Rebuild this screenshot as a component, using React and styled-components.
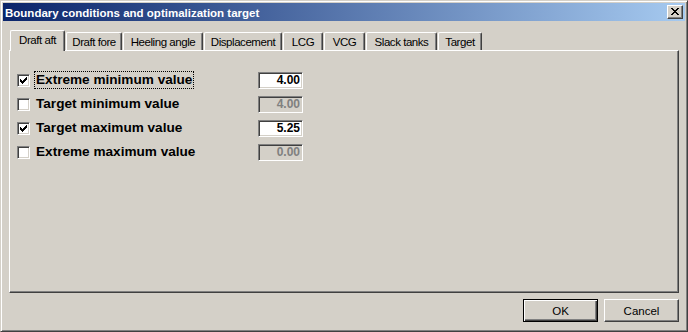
import React from "react";
import styled, { createGlobalStyle } from "styled-components";

const GlobalStyle = createGlobalStyle`
  html, body { margin: 0; padding: 0; background: #D4D0C8; }
  body { width: 688px; height: 332px; overflow: hidden; }
`;

const Window = styled.div`
  box-sizing: border-box;
  width: 688px;
  height: 332px;
  background: #d4d0c8;
  border: 1px solid;
  border-color: #d4d0c8 #404040 #404040 #d4d0c8;
  box-shadow: inset 1px 1px #ffffff, inset -1px -1px #808080;
  padding: 2px;
  display: flex;
  flex-direction: column;
  font-family: "Liberation Sans", Arial, sans-serif;
  color: #000;
`;

const TitleBar = styled.div`
  box-sizing: border-box;
  height: 18px;
  flex: none;
  padding: 2px 2px 0 2px;
  display: flex;
  align-items: center;
  background: linear-gradient(to right, #0a246a, #a6caf0);
`;

const Title = styled.div`
  flex: 1;
  color: #fff;
  font-weight: bold;
  font-size: 11.5px;
  white-space: nowrap;
  align-self: center;
`;

const CloseButton = styled.div`
  box-sizing: border-box;
  align-self: flex-start;
  width: 16px;
  height: 14px;
  background: #d4d0c8;
  border: 1px solid;
  border-color: #ffffff #404040 #404040 #ffffff;
  box-shadow: inset -1px -1px #808080;
  display: flex;
  align-items: center;
  justify-content: center;
  padding-bottom: 1px;
  padding-right: 1px;
`;

const Body = styled.div`
  flex: 1;
  display: flex;
  flex-direction: column;
  padding: 9px 6px 7px 6px;
`;

const TabStrip = styled.div`
  display: flex;
  align-items: flex-end;
  height: 20px;
  flex: none;
`;

const Tab = styled.div`
  box-sizing: border-box;
  width: ${(p) => p.$w}px;
  height: ${(p) => (p.$active ? 21 : 18)}px;
  margin-left: 1px;
  margin-bottom: ${(p) => (p.$active ? -1 : 0)}px;
  position: relative;
  z-index: ${(p) => (p.$active ? 1 : 0)};
  background: #d4d0c8;
  border-top: 1px solid #fff;
  border-left: 1px solid #fff;
  border-right: 1px solid #404040;
  border-top-left-radius: 2px;
  border-top-right-radius: 2px;
  box-shadow: inset -1px 0 #808080;
  padding-top: 2px;
  text-align: center;
  font-size: 11.5px;
  line-height: 14px;
  letter-spacing: -0.45px;
  white-space: nowrap;
`;

const Panel = styled.div`
  box-sizing: border-box;
  height: 243px;
  flex: none;
  border: 1px solid;
  border-color: #ffffff #404040 #404040 #ffffff;
  box-shadow: inset -1px -1px #808080;
  padding: 17px 0 0 7px;
  display: flex;
  flex-direction: column;
`;

const Row = styled.div`
  display: grid;
  grid-template-columns: 13px 220px 45px;
  column-gap: 4px;
  align-items: center;
  height: 24px;
`;

const CheckBox = styled.div`
  box-sizing: border-box;
  width: 13px;
  height: 13px;
  background: #fff;
  border: 1px solid;
  border-color: #808080 #ffffff #ffffff #808080;
  box-shadow: inset 1px 1px #404040, inset -1px -1px #d4d0c8;
  padding: 2px 0 0 2px;
  display: flex;
`;

const Label = styled.div`
  justify-self: start;
  box-sizing: border-box;
  border: 1px dotted ${(p) => (p.$focused ? "#000" : "transparent")};
  padding: 0 1px;
  font-weight: bold;
  font-size: 13.6px;
  line-height: 16px;
  white-space: nowrap;
`;

const Field = styled.input`
  box-sizing: border-box;
  width: 45px;
  height: 17px;
  margin: 0;
  border: 1px solid;
  border-color: #808080 #ffffff #ffffff #808080;
  box-shadow: inset 1px 1px #404040, inset -1px -1px #d4d0c8;
  background: ${(p) => (p.disabled ? "#d4d0c8" : "#ffffff")};
  color: ${(p) => (p.disabled ? "#808080" : "#000000")};
  -webkit-text-fill-color: ${(p) => (p.disabled ? "#808080" : "#000000")};
  opacity: 1;
  font-family: "Liberation Sans", Arial, sans-serif;
  font-weight: bold;
  font-size: 12px;
  line-height: 15px;
  text-align: right;
  padding: 0 2px 0 0;
  outline: none;
`;

const ButtonRow = styled.div`
  display: flex;
  justify-content: flex-end;
  gap: 6px;
  margin-top: 6px;
`;

const Button = styled.div`
  box-sizing: border-box;
  width: 75px;
  height: 23px;
  display: flex;
  align-items: center;
  justify-content: center;
  font-size: 11.5px;
  background: #d4d0c8;
  border: 1px solid;
  border-color: ${(p) =>
    p.$default ? "#000 #000 #000 #000" : "#ffffff #404040 #404040 #ffffff"};
  box-shadow: ${(p) =>
    p.$default
      ? "inset 1px 1px #ffffff, inset -1px -1px #404040, inset -2px -2px #808080"
      : "inset -1px -1px #808080"};
`;

const CheckGlyph = () => (
  <svg width="7" height="7" viewBox="0 0 7 7" shapeRendering="crispEdges">
    <path
      fill="#000"
      d="M0 2h1v3H0z M1 3h1v3H1z M2 4h1v3H2z M3 3h1v3H3z M4 2h1v3H4z M5 1h1v3H5z M6 0h1v3H6z"
    />
  </svg>
);

const CloseGlyph = () => (
  <svg width="8" height="7" viewBox="0 0 8 7" shapeRendering="crispEdges">
    <path
      fill="#000"
      d="M0 0h2v1H0z M6 0h2v1H6z M1 1h2v1H1z M5 1h2v1H5z M2 2h4v1H2z M3 3h2v1H3z M2 4h4v1H2z M1 5h2v1H1z M5 5h2v1H5z M0 6h2v1H0z M6 6h2v1H6z"
    />
  </svg>
);

const tabs = [
  { label: "Draft aft", w: 55 },
  { label: "Draft fore", w: 56 },
  { label: "Heeling angle", w: 80 },
  { label: "Displacement", w: 78 },
  { label: "LCG", w: 40 },
  { label: "VCG", w: 41 },
  { label: "Slack tanks", w: 71 },
  { label: "Target", w: 44 },
];

const rows = [
  { label: "Extreme minimum value", checked: true, value: "4.00", focused: true },
  { label: "Target minimum value", checked: false, value: "4.00" },
  { label: "Target maximum value", checked: true, value: "5.25" },
  { label: "Extreme maximum value", checked: false, value: "0.00" },
];

export default function App() {
  return (
    <>
      <GlobalStyle />
      <Window>
        <TitleBar>
          <Title>Boundary conditions and optimalization target</Title>
          <CloseButton>
            <CloseGlyph />
          </CloseButton>
        </TitleBar>
        <Body>
          <TabStrip>
            {tabs.map((t, i) => (
              <Tab key={t.label} $w={t.w} $active={i === 0}>
                {t.label}
              </Tab>
            ))}
          </TabStrip>
          <Panel>
            {rows.map((r) => (
              <Row key={r.label}>
                <CheckBox>{r.checked && <CheckGlyph />}</CheckBox>
                <Label $focused={r.focused}>{r.label}</Label>
                <Field readOnly disabled={!r.checked} value={r.value} />
              </Row>
            ))}
          </Panel>
          <ButtonRow>
            <Button $default>OK</Button>
            <Button>Cancel</Button>
          </ButtonRow>
        </Body>
      </Window>
    </>
  );
}
